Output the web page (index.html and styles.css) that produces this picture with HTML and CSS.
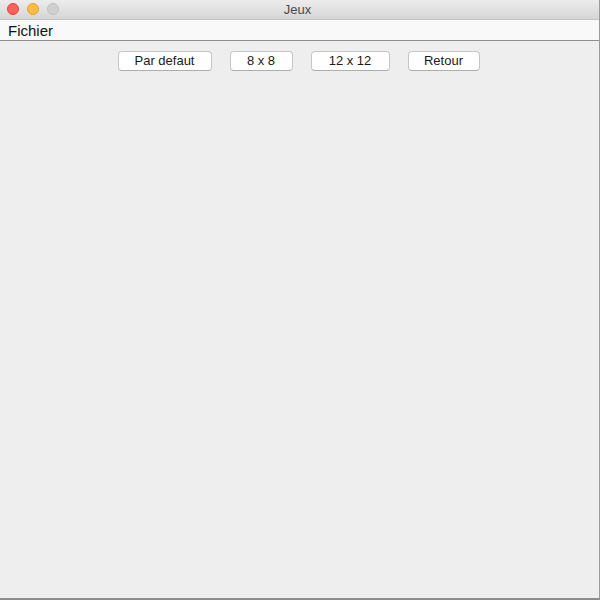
FILE: index.html
```html
<!DOCTYPE html>
<html lang="fr">
<head>
<meta charset="utf-8">
<title>Jeux</title>
<link rel="stylesheet" href="styles.css">
</head>
<body>
<div class="window">
  <div class="titlebar">
    <div class="lights">
      <span class="light red"></span>
      <span class="light yellow"></span>
      <span class="light gray"></span>
    </div>
    <div class="title">Jeux</div>
  </div>
  <div class="menubar"><span class="menu">Fichier</span></div>
  <div class="content">
    <div class="toolbar">
      <button class="btn w-default">Par defaut</button>
      <button class="btn w-8">8 x 8</button>
      <button class="btn w-12">12 x 12</button>
      <button class="btn w-back">Retour</button>
    </div>
  </div>
</div>
</body>
</html>
```
FILE: styles.css
```css
html, body {
  margin: 0;
  padding: 0;
  width: 600px;
  height: 600px;
  overflow: hidden;
  font-family: "Liberation Sans", Arial, sans-serif;
}
.window {
  width: 600px;
  height: 600px;
  box-sizing: border-box;
  display: flex;
  flex-direction: column;
  background: #eeeeee;
  border-right: 1px solid #9a9a9a;
  border-bottom: 2px solid #8c8c8c;
}
.titlebar {
  height: 19px;
  flex: none;
  position: relative;
  background: linear-gradient(#ececec, #d6d6d6);
  border-bottom: 1px solid #c4c4c4;
  display: flex;
  align-items: center;
  justify-content: center;
}
.lights {
  position: absolute;
  left: 7px;
  top: 3px;
  display: flex;
  gap: 8px;
}
.light {
  width: 12px;
  height: 12px;
  border-radius: 50%;
  box-sizing: border-box;
}
.red { background: #fc605c; border: 1px solid #e0443e; }
.yellow { background: #fdbc40; border: 1px solid #dea236; }
.gray { background: #d0d0d0; border: 1px solid #c0c0c0; }
.title {
  font-size: 13px;
  color: #4b4b4b;
  margin-left: -4px;
}
.menubar {
  height: 20px;
  flex: none;
  background: #f9f9f9;
  border-bottom: 1px solid #8e8e8e;
  display: flex;
  align-items: center;
  padding-left: 8px;
}
.menu {
  font-size: 15px;
  color: #111;
}
.content {
  flex: 1;
  background: #eeeeee;
}
.toolbar {
  display: flex;
  justify-content: center;
  gap: 18px;
  padding-top: 10px;
  padding-right: 2px;
}
.btn {
  height: 20px;
  padding: 0;
  box-sizing: border-box;
  background: #ffffff;
  border: 1px solid #c6c6c6;
  border-bottom-color: #adadad;
  border-radius: 4px;
  font-family: "Liberation Sans", Arial, sans-serif;
  font-size: 13px;
  color: #1a1a1a;
  line-height: 18px;
}
.w-default { width: 94px; }
.w-8 { width: 63px; }
.w-12 { width: 79px; }
.w-back { width: 72px; }
```
